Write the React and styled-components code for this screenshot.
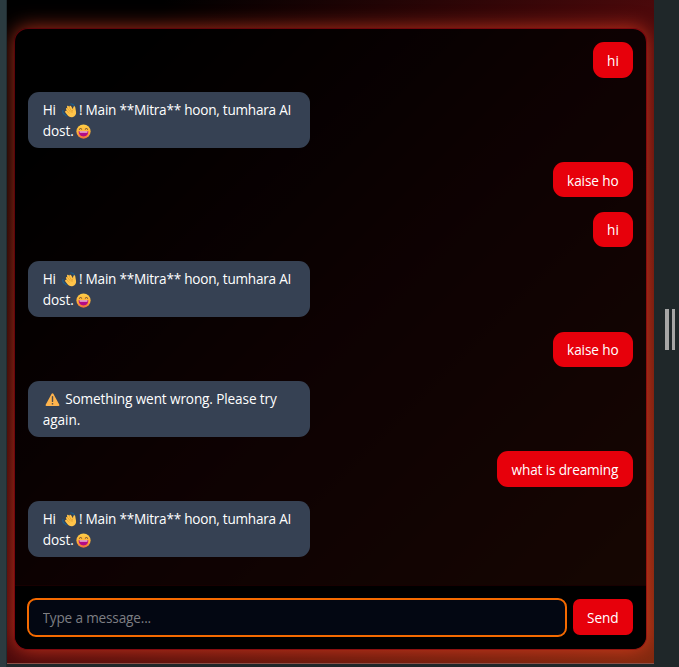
import React from "react";
import styled, { createGlobalStyle, css } from "styled-components";

const GlobalStyle = createGlobalStyle`
  *, *::before, *::after { box-sizing: border-box; }
  html, body { margin: 0; padding: 0; overflow: hidden; }
  body, input, button { font-family: "Segoe UI", "Open Sans", "Noto Sans", sans-serif; }
`;

const Viewport = styled.div`
  display: grid;
  grid-template-columns: 7px 647px 25px;
  width: 679px;
  height: 667px;
  background: #1f2729;
`;

const LeftEdge = styled.div`
  background: #2b3b40;
  border-right: 1px solid #202c30;
`;

const Page = styled.main`
  height: 664px;
  padding: 28px 7px 0;
  overflow: hidden;
  border-bottom: 1px solid #8b5148;
  background: linear-gradient(135deg, #000 0%, #000 12%, #4b090b 50%, #80290f 100%);
`;

const RightEdge = styled.aside`
  display: flex;
  justify-content: center;
  align-items: flex-start;
  gap: 3px;
  padding: 309px 0 0 7px;
`;

const Grip = styled.span`
  width: 3.5px;
  height: 41px;
  background: #a6a6a6;
`;

const Card = styled.section`
  display: flex;
  flex-direction: column;
  height: 621.5px;
  overflow: hidden;
  border: 1px solid rgba(170, 8, 18, 0.55);
  border-radius: 14px;
  background: rgba(0, 0, 0, 0.82);
  background-clip: padding-box;
  box-shadow: 0 0 20px rgba(255, 68, 35, 0.7);
`;

const Messages = styled.div`
  flex: 1;
  display: flex;
  flex-direction: column;
  gap: 14.15px;
  padding: 13.4px 13.2px 0 13.4px;
`;

const Bubble = styled.div`
  flex: none;
  padding: 7.05px 14.3px;
  border-radius: 11px;
  font-size: 13.6px;
  line-height: 21.15px;
  color: #fff;
  white-space: nowrap;
  ${(p) =>
    p.$mine
      ? css`
          align-self: flex-end;
          width: ${p.$width}px;
          padding-top: 7.65px;
          padding-bottom: 6.45px;
          background: #e7000b;
        `
      : css`
          align-self: flex-start;
          width: 282px;
          background: #364153;
        `}
`;

const Line = styled.div`
  height: 21.15px;
  letter-spacing: ${(p) => p.$track || 0}px;
`;

const Emoji = styled.svg`
  display: inline-block;
  width: 15px;
  height: 15px;
  margin: 0 ${(p) => p.$after || 0}px 0 ${(p) => p.$before || 0}px;
  vertical-align: -3px;
`;

const Composer = styled.form`
  display: flex;
  align-items: center;
  gap: 5.5px;
  height: 64px;
  padding: 0 13.3px 0 11.5px;
  border-top: 1px solid rgba(110, 0, 6, 0.22);
  background: #000;
`;

const MessageInput = styled.input`
  flex: 1;
  min-width: 0;
  height: 39px;
  padding: 0 14px;
  border: 2px solid #f56a00;
  border-radius: 9px;
  outline: none;
  background: #030712;
  color: #fff;
  font-size: 13.6px;
  letter-spacing: -0.17px;
  &::placeholder { color: #7d7e82; opacity: 1; }
`;

const SendButton = styled.button`
  width: 60px;
  height: 36px;
  padding: 0;
  border: 0;
  border-radius: 7px;
  background: #e7000b;
  color: #fff;
  font-size: 13.6px;
  letter-spacing: -0.1px;
`;

const Wave = () => (
  <Emoji viewBox="0 0 16 16" $before={3.5} $after={1.5} aria-label="waving hand">
    <path d="M9.5 .9Q12.3.8 13.4 3.4M1 8Q.3 10.3 2.2 12M3 11.8Q3.2 13.4 5 13.8" fill="none" stroke="#1b5d8c" strokeWidth="1.2" strokeLinecap="round" />
    <path d="M4.6 7.2C3.5 5.7 5 4.8 5.9 5.8L5.4 4.6C4.9 3 6.7 2.5 7.4 3.8L7.8 4.6C7.4 2.8 9.2 2.2 9.9 3.7L11.6 6.6L12 4.7C12.3 3 14.1 3.3 14.2 5L15 9.6C15.4 12.2 13.9 14.7 11 15.2C8.4 15.5 6.7 14.2 5.5 12.5L3.6 10.1C2.7 8.8 4 7.5 5.1 8.6Z" fill="#ffc44a" />
    <path d="M5.9 5.8l2.9 3.7M7.7 4.6l2.3 3.8M5.1 8.3l2.4 2.7M11.6 7.2q-1.7 1.2-1 3" fill="none" stroke="#d78a20" strokeWidth=".55" strokeLinecap="round" />
  </Emoji>
);

const Grin = () => (
  <Emoji viewBox="0 0 16 16" $before={2.1} aria-label="grinning face">
    <defs>
      <linearGradient id="face" x1="0" y1="0" x2="0" y2="1">
        <stop offset="0" stopColor="#ffcf48" />
        <stop offset=".6" stopColor="#ffad35" />
        <stop offset="1" stopColor="#f1693c" />
      </linearGradient>
    </defs>
    <circle cx="8" cy="8" r="7.6" fill="url(#face)" />
    <path d="M3.4 5.6Q4.7 3.8 6.2 5.4M9.8 5.4Q11.3 3.8 12.6 5.6" fill="none" stroke="#63412e" strokeWidth="1" strokeLinecap="round" />
    <path d="M2.8 7.8h10.4q.1 5.4-5.2 5.4T2.8 7.8Z" fill="#b30b85" />
    <path d="M3.8 8h8.4v.5q0 .6-.8.6H4.6q-.8 0-.8-.6Z" fill="#fff" />
  </Emoji>
);

const Warning = () => (
  <Emoji viewBox="0 0 16 16" $before={2.1} $after={2} aria-label="warning">
    <path d="M8 1.2q.6 0 .9.6l6.4 11.8q.6 1.2-.8 1.2h-13q-1.4 0-.8-1.2L7.1 1.8q.3-.6.9-.6Z" fill="#ffb44d" />
    <path d="M8 5v5" stroke="#514b47" strokeWidth="1.5" strokeLinecap="round" />
    <circle cx="8" cy="12.5" r=".9" fill="#514b47" />
  </Emoji>
);

const Greeting = () => (
  <Bubble>
    <Line $track={-0.24}>Hi <Wave />! Main **Mitra** hoon, tumhara AI</Line>
    <Line $track={-0.05}>dost.<Grin /></Line>
  </Bubble>
);

export default function App() {
  return (
    <>
      <GlobalStyle />
      <Viewport>
        <LeftEdge />
        <Page>
          <Card>
            <Messages>
              <Bubble $mine $width={40}><Line>hi</Line></Bubble>
              <Greeting />
              <Bubble $mine $width={80}><Line $track={-0.1}>kaise ho</Line></Bubble>
              <Bubble $mine $width={40}><Line>hi</Line></Bubble>
              <Greeting />
              <Bubble $mine $width={80}><Line $track={-0.1}>kaise ho</Line></Bubble>
              <Bubble>
                <Line $track={-0.12}><Warning /> Something went wrong. Please try</Line>
                <Line $track={-0.05}>again.</Line>
              </Bubble>
              <Bubble $mine $width={135.5}><Line $track={-0.15}>what is dreaming</Line></Bubble>
              <Greeting />
            </Messages>
            <Composer onSubmit={(e) => e.preventDefault()}>
              <MessageInput placeholder="Type a message..." />
              <SendButton type="submit">Send</SendButton>
            </Composer>
          </Card>
        </Page>
        <RightEdge>
          <Grip />
          <Grip />
        </RightEdge>
      </Viewport>
    </>
  );
}
